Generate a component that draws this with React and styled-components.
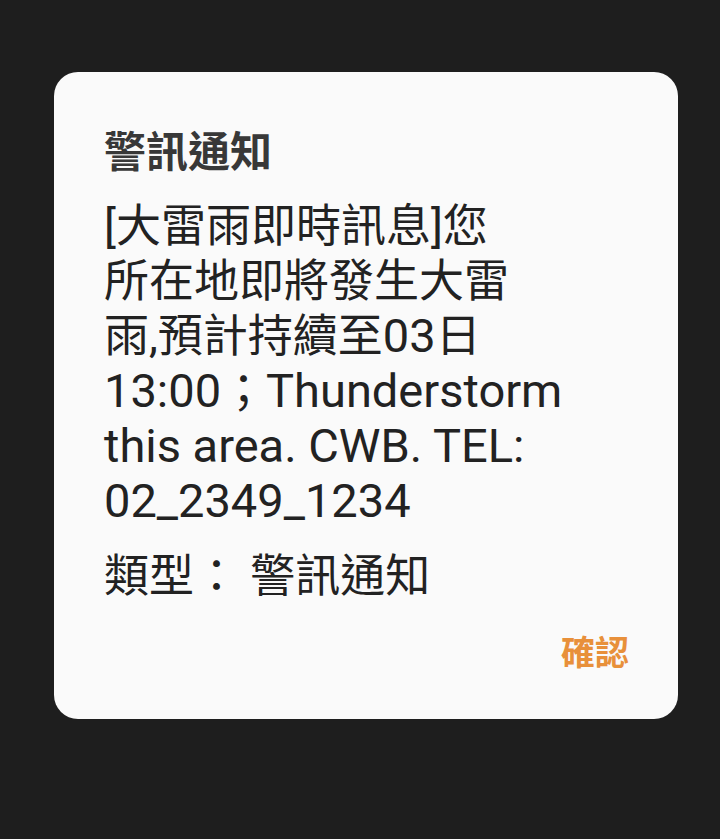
import React from 'react'
import styled, { createGlobalStyle } from 'styled-components'

const GlobalStyle = createGlobalStyle`
  html, body {
    margin: 0;
    padding: 0;
    background: #1e1e1e;
  }
`

/**
 * Style
 */
const Screen = styled.div`
  width: 720px;
  height: 839px;
  box-sizing: border-box;
  padding: 72px 42px 0 54px;
  background: #1e1e1e;
  font-family: Roboto, 'Noto Sans CJK TC', sans-serif;
`
const Dialog = styled.div`
  width: 624px;
  height: 647px;
  box-sizing: border-box;
  padding: 57px 50px 0 50px;
  background: #fafafa;
  border-radius: 24px;
  display: flex;
  flex-direction: column;
`
// spans keep line-height 1 so the strut alone sets the baseline
const Text = styled.span`
  line-height: 1;
`
const Title = styled.h2`
  margin: 0;
  height: 48px;
  font-size: 42px;
  line-height: 48px;
  font-weight: 700;
  color: #383838;
`
const Message = styled.div`
  margin-top: 22px;
  font-size: 45px;
  line-height: 55px;
  color: #222;
`
const Line = styled.div`
  height: 55px;
  white-space: nowrap;
`
const Latin = styled.span`
  font-size: 47px;
  line-height: 1;
`
const Kind = styled.div`
  margin-top: 20px;
  height: 55px;
  font-size: 45px;
  line-height: 55px;
  color: #222;
  white-space: pre;
`
const Actions = styled.div`
  display: flex;
  justify-content: flex-end;
  margin-top: 27px;
  margin-right: -1px;
`
const Confirm = styled.button`
  border: 0;
  background: none;
  padding: 0;
  height: 44px;
  font-family: inherit;
  font-size: 34px;
  line-height: 44px;
  font-weight: 700;
  color: #e8903a;
  cursor: pointer;
`

/**
 * Component
 */
const App = () => (
  <>
    <GlobalStyle />
    <Screen>
      <Dialog>
        <Title>
          <Text>警訊通知</Text>
        </Title>
        <Message>
          <Line>
            <Text>[大雷雨即時訊息]您</Text>
          </Line>
          <Line>
            <Text>所在地即將發生大雷</Text>
          </Line>
          <Line>
            <Text>
              雨,預計持續至<Latin>03</Latin>日
            </Text>
          </Line>
          <Line>
            <Text>
              <Latin>13:00</Latin>；<Latin>Thunderstorm</Latin>
            </Text>
          </Line>
          <Line>
            <Latin>this area. CWB. TEL:</Latin>
          </Line>
          <Line>
            <Latin>02_2349_1234</Latin>
          </Line>
        </Message>
        <Kind>
          <Text>類型： 警訊通知</Text>
        </Kind>
        <Actions>
          <Confirm>
            <Text>確認</Text>
          </Confirm>
        </Actions>
      </Dialog>
    </Screen>
  </>
)

export default App
